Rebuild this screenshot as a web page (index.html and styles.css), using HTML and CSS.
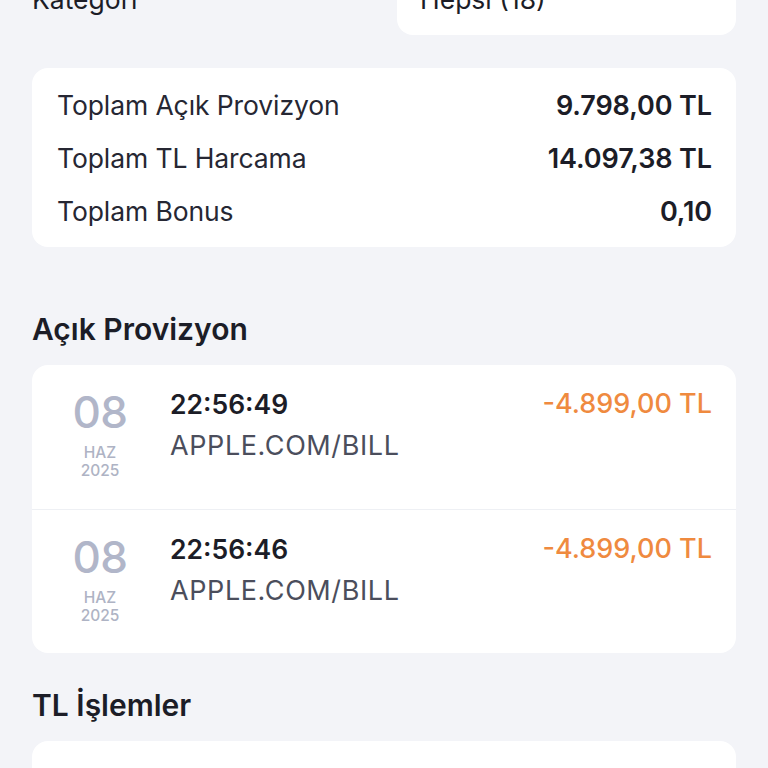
FILE: index.html
```html
<!DOCTYPE html>
<html lang="tr">
<head>
<meta charset="utf-8">
<link rel="stylesheet" href="styles.css">
</head>
<body>
<div class="page">
  <div class="filter">
    <div class="filter-label">Kategori</div>
    <div class="select">
      <span>Hepsi (18)</span>
      <svg class="chev" width="16" height="10" viewBox="0 0 16 10"><path d="M2 2l6 6 6-6" fill="none" stroke="#9aa0b0" stroke-width="2" stroke-linecap="round" stroke-linejoin="round"/></svg>
    </div>
  </div>

  <div class="card summary">
    <div class="sum-row"><span>Toplam Açık Provizyon</span><span class="val">9.798,00 TL</span></div>
    <div class="sum-row"><span>Toplam TL Harcama</span><span class="val">14.097,38 TL</span></div>
    <div class="sum-row"><span>Toplam Bonus</span><span class="val">0,10</span></div>
  </div>

  <h2 class="section first">Açık Provizyon</h2>
  <div class="card list">
    <div class="tx">
      <div class="date"><div class="day">08</div><div class="mon">HAZ</div><div class="yr">2025</div></div>
      <div class="info"><div class="time">22:56:49</div><div class="merchant">APPLE.COM/BILL</div></div>
      <div class="amount">-4.899,00 TL</div>
    </div>
    <div class="tx">
      <div class="date"><div class="day">08</div><div class="mon">HAZ</div><div class="yr">2025</div></div>
      <div class="info"><div class="time">22:56:46</div><div class="merchant">APPLE.COM/BILL</div></div>
      <div class="amount">-4.899,00 TL</div>
    </div>
  </div>

  <h2 class="section">TL İşlemler</h2>
  <div class="card list tall"></div>
</div>
</body>
</html>
```

FILE: styles.css
```css
html, body {
  margin: 0;
  padding: 0;
  background: #f3f4f8;
  height: 100%;
  overflow: hidden;
}
body {
  font-family: Inter, "Noto Sans", "Liberation Sans", sans-serif;
  color: #1c1d27;
}
.page {
  padding: 0 32px;
}
.filter {
  display: grid;
  grid-template-columns: 1fr 339px;
  align-items: center;
  margin-top: -37px;
}
.filter-label {
  font-size: 26.5px;
  color: #1c1d27;
  line-height: 72px;
}
.select {
  height: 72px;
  background: #fff;
  border-radius: 16px;
  display: flex;
  align-items: center;
  justify-content: space-between;
  padding: 0 32px 0 23px;
  font-size: 26.5px;
  color: #1c1d27;
}
.chev {
  margin-top: -6px;
}
.card {
  background: #fff;
  border-radius: 16px;
}
.summary {
  margin-top: 33px;
  padding: 11px 24px 9px 25px;
}
.sum-row {
  display: flex;
  justify-content: space-between;
  font-size: 26.5px;
  line-height: 53px;
  color: #262733;
  letter-spacing: -0.1px;
}
.sum-row .val {
  font-weight: 600;
  color: #1c1d27;
  font-size: 27px;
}
.section {
  margin: 34px 0 18px;
  font-size: 30px;
  line-height: 36px;
  font-weight: 600;
  color: #1c1d27;
}
.section.first {
  margin-top: 64px;
}
.tx {
  display: flex;
  align-items: flex-start;
  height: 144px;
  box-sizing: border-box;
  padding: 22px 24px 0 24px;
}
.tx + .tx {
  border-top: 1px solid #eef0f4;
  height: 144px;
}
.date {
  width: 88px;
  text-align: center;
  color: #b1b6c9;
}
.day {
  font-size: 44px;
  line-height: 50px;
  font-weight: 500;
  letter-spacing: -0.5px;
}
.mon, .yr {
  font-size: 15.5px;
  line-height: 18px;
  font-weight: 500;
  color: #aeb3c4;
}
.mon {
  margin-top: 7px;
}
.info {
  flex: 1;
  margin-left: 26px;
}
.time {
  font-size: 26.5px;
  line-height: 34px;
  font-weight: 600;
  color: #1c1d27;
}
.merchant {
  margin-top: 8px;
  font-size: 27px;
  line-height: 34px;
  letter-spacing: 0.6px;
  color: #4b4e5c;
}
.amount {
  font-size: 27px;
  line-height: 34px;
  font-weight: 500;
  color: #ef8a3f;
}
.tall {
  height: 200px;
}
```
